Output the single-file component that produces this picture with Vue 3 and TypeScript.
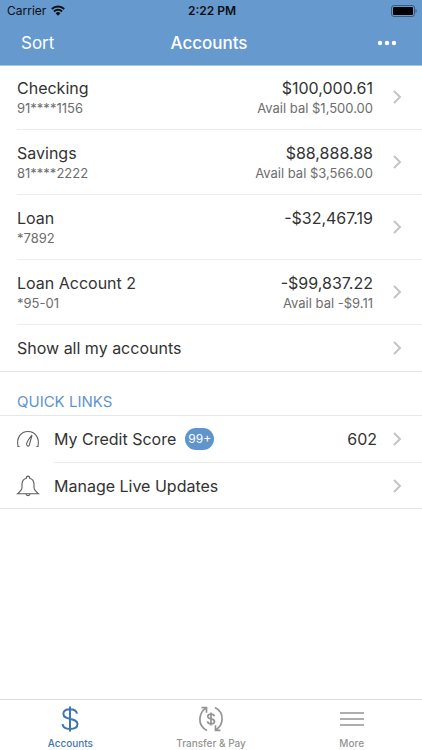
<script setup lang="ts">
interface Account {
  name: string
  number: string
  balance: string
  available?: string
}

interface QuickLink {
  label: string
  icon: 'gauge' | 'bell'
  badge?: string
  value?: string
}

interface Tab {
  label: string
  icon: 'dollar' | 'transfer' | 'menu'
  active: boolean
}

const accounts: Account[] = [
  { name: 'Checking', number: '91****1156', balance: '$100,000.61', available: 'Avail bal $1,500.00' },
  { name: 'Savings', number: '81****2222', balance: '$88,888.88', available: 'Avail bal $3,566.00' },
  { name: 'Loan', number: '*7892', balance: '-$32,467.19' },
  { name: 'Loan Account 2', number: '*95-01', balance: '-$99,837.22', available: 'Avail bal -$9.11' },
]

const quickLinks: QuickLink[] = [
  { label: 'My Credit Score', icon: 'gauge', badge: '99+', value: '602' },
  { label: 'Manage Live Updates', icon: 'bell' },
]

const tabs: Tab[] = [
  { label: 'Accounts', icon: 'dollar', active: true },
  { label: 'Transfer & Pay', icon: 'transfer', active: false },
  { label: 'More', icon: 'menu', active: false },
]
</script>

<template>
  <div class="screen">
    <header class="top">
      <div class="status">
        <span class="carrier">
          Carrier
          <svg class="wifi" viewBox="0 0 14 11" aria-hidden="true">
            <path d="M0.8 4a8.800 8.800 0 0 1 12.400 0" />
            <path d="M3 6.500a5.700 5.700 0 0 1 8 0" />
            <path class="solid" d="M7 10.700 4.600 8.300a3.400 3.400 0 0 1 4.800 0z" />
          </svg>
        </span>
        <time class="time">2:22 PM</time>
        <svg class="battery" viewBox="0 0 26 12" aria-hidden="true">
          <rect class="shell" x="0.5" y="0.5" width="23" height="11" rx="2.5" />
          <rect x="2" y="2" width="20" height="8" rx="1" />
          <path class="cap" d="M24.5 4v4c1.6-.6 1.6-3.400 0-4z" />
        </svg>
      </div>
      <nav class="bar">
        <button type="button" class="sort">Sort</button>
        <h1 class="title">Accounts</h1>
        <button type="button" class="options" aria-label="Options">
          <svg viewBox="0 0 20 6" aria-hidden="true">
            <circle cx="3" cy="3" r="2.200" />
            <circle cx="10" cy="3" r="2.200" />
            <circle cx="17" cy="3" r="2.200" />
          </svg>
        </button>
      </nav>
    </header>

    <main class="content">
      <ul class="list">
        <li v-for="account in accounts" :key="account.name" class="item">
          <a href="#" class="row account">
            <span class="lines">
              <span class="primary">{{ account.name }}</span>
              <span class="secondary">{{ account.number }}</span>
            </span>
            <span class="lines amounts">
              <span class="primary">{{ account.balance }}</span>
              <span v-if="account.available" class="secondary">{{ account.available }}</span>
            </span>
            <svg class="chevron" viewBox="0 0 8 14" aria-hidden="true"><path d="M1 1l6 6-6 6" /></svg>
          </a>
        </li>
        <li class="item last">
          <a href="#" class="row single">
            <span class="primary grow">Show all my accounts</span>
            <svg class="chevron" viewBox="0 0 8 14" aria-hidden="true"><path d="M1 1l6 6-6 6" /></svg>
          </a>
        </li>
      </ul>

      <h2 class="section">QUICK LINKS</h2>
      <ul class="list">
        <li v-for="link in quickLinks" :key="link.label" class="item link">
          <a href="#" class="row single">
            <svg v-if="link.icon === 'gauge'" class="link-icon" viewBox="0 0 22 22" aria-hidden="true">
              <path d="M2.600 18.500H1C-.8 9.500 4 3.500 11 3.500s11.800 6 10 15h-1.600" />
              <path d="M15 7.200C12.600 10 10.500 12.800 9.700 15.400c-.8 3 2 3.800 2.800 1.200.7-2.800 1.700-6.200 2.500-9.400z" />
            </svg>
            <svg v-else class="link-icon" viewBox="0 0 22 22" aria-hidden="true">
              <path d="M9.300 3.300C9.300.4 12.700.4 12.700 3.300c2.900.8 4.300 3 4.300 6v3.200c0 2.600 1.500 3.800 4.400 6.200H.6C3.500 16.300 5 15.100 5 12.500V9.300c0-3 1.400-5.200 4.300-6z" />
              <path d="M9 18.700c.2 2.600 3.800 2.600 4 0" />
            </svg>
            <span class="primary">{{ link.label }}</span>
            <span v-if="link.badge" class="badge">{{ link.badge }}</span>
            <span class="primary value">{{ link.value }}</span>
            <svg class="chevron" viewBox="0 0 8 14" aria-hidden="true"><path d="M1 1l6 6-6 6" /></svg>
          </a>
        </li>
      </ul>
    </main>

    <nav class="tabs">
      <a v-for="tab in tabs" :key="tab.label" href="#" class="tab" :class="{ active: tab.active }">
        <svg v-if="tab.icon === 'dollar'" class="tab-icon" viewBox="0 0 26 26" aria-hidden="true">
          <path d="M13 .5v25M20 7.600C19.500 4.800 17 3.200 13 3.200c-4 0-6.600 1.800-6.600 4.700 0 6.800 14.100 3.300 14.100 10.200 0 3-3 4.900-7.500 4.900-4.300 0-7.100-1.800-7.500-5" />
        </svg>
        <svg v-else-if="tab.icon === 'transfer'" class="tab-icon transfer" viewBox="0 0 26 26" aria-hidden="true">
          <path d="M9 24.500C4 22 1.600 17.800 1.900 12.500 2.200 8 4.400 4.500 8.300 1.900M3.500 1.700h5v5" />
          <path d="M17 1.500c5 2.500 7.400 6.700 7.100 12-.3 4.500-2.500 8-6.400 10.600M22.500 24.300h-5v-5" />
          <path d="M13 6.500v13M16.300 10.300c-.3-1.400-1.400-2.100-3.300-2.100-1.900 0-3.200.8-3.200 2.200 0 3.300 6.700 1.700 6.700 5 0 1.500-1.400 2.400-3.500 2.400s-3.400-.9-3.600-2.400" />
        </svg>
        <svg v-else class="tab-icon menu" viewBox="0 0 26 26" aria-hidden="true">
          <path d="M1 7h24M1 13h24M1 19h24" />
        </svg>
        <span>{{ tab.label }}</span>
      </a>
    </nav>
  </div>
</template>

<style>
body {
  margin: 0;
  background: #fff;
}
</style>

<style scoped>
.screen {
  display: flex;
  flex-direction: column;
  min-height: 100vh;
  font-family: Inter, "Liberation Sans", sans-serif;
  color: #333;
}

a {
  color: inherit;
  text-decoration: none;
}

svg {
  display: block;
  flex: none;
  overflow: visible;
}

.top {
  background: #6699cd;
  box-shadow: 0 1px 0 #a9c5e2;
}

.status {
  display: grid;
  grid-template-columns: 1fr auto 1fr;
  align-items: center;
  height: 21px;
  padding: 0 5px 0 7px;
  font-size: 12px;
  color: #0b0f14;
}

.carrier {
  display: flex;
  align-items: center;
  gap: 5px;
}

.wifi {
  width: 14px;
  height: 11px;
  fill: none;
  stroke: #0b0f14;
  stroke-width: 2;
}

.wifi .solid {
  fill: #0b0f14;
  stroke: none;
}

.time {
  font-weight: 600;
}

.battery {
  justify-self: end;
  width: 26px;
  height: 12px;
  fill: #000;
}

.battery .shell {
  fill: none;
  stroke: #3c5a79;
}

.battery .cap {
  fill: #3c5a79;
}

.bar {
  display: grid;
  grid-template-columns: 1fr auto 1fr;
  align-items: center;
  height: 44px;
  padding: 0 25px 0 21px;
  color: #fff;
}

button {
  padding: 0;
  border: 0;
  background: none;
  color: inherit;
  font: inherit;
  cursor: pointer;
}

.sort {
  justify-self: start;
  font-size: 17px;
}

.title {
  margin: 0;
  font-size: 17px;
  font-weight: 500;
}

.options {
  justify-self: end;
}

.options svg {
  width: 20px;
  height: 6px;
  fill: #fff;
}

.content {
  flex: 1;
}

.list {
  margin: 0;
  padding: 0;
  list-style: none;
}

.item {
  padding-left: 17px;
}

.item.last,
.link:last-child {
  border-bottom: 1px solid #e6e6e8;
}

.row {
  display: flex;
  align-items: center;
  box-sizing: border-box;
  padding-right: 21px;
  border-bottom: 1px solid #ececee;
}

.item.last .row,
.link:last-child .row {
  border-bottom: 0;
}

.account {
  height: 65px;
}

.single {
  height: 46px;
}

.lines {
  display: flex;
  flex: 1;
  flex-direction: column;
  align-self: flex-start;
  padding-top: 13px;
}

.amounts {
  align-items: flex-end;
}

.primary {
  font-size: 16px;
  line-height: 20px;
}

.secondary {
  font-size: 13px;
  line-height: 20px;
  color: #6d6d6d;
}

.grow {
  flex: 1;
}

.chevron {
  width: 8px;
  height: 14px;
  margin-left: 20px;
  fill: none;
  stroke: #c4c4c8;
  stroke-width: 2;
}

.section {
  box-sizing: border-box;
  height: 44px;
  margin: 0;
  padding: 20px 17px 0;
  border-bottom: 1px solid #e6e6e8;
  font-size: 15px;
  font-weight: 400;
  line-height: 20px;
  color: #5f95cc;
}

.link {
  display: flex;
}

.link .row {
  position: relative;
  flex: 1;
  height: 45px;
  border-bottom: 0;
}

.link:first-child .row {
  height: 47px;
  padding-bottom: 1px;
}

.link:first-child .row::after {
  content: "";
  position: absolute;
  right: 0;
  bottom: 0;
  left: 37px;
  height: 1px;
  background: #ececee;
}

.link-icon {
  width: 22px;
  height: 22px;
  margin-right: 15px;
  fill: none;
  stroke: #5c5c5c;
  stroke-width: 1.1;
}

.badge {
  margin-left: 9px;
  padding: 0 3px;
  border-radius: 11px;
  background: #5f95cc;
  font-size: 12px;
  line-height: 22px;
  color: #fff;
}

.value {
  flex: 1;
  text-align: right;
}

.value + .chevron {
  margin-left: 16px;
}

.tabs {
  display: flex;
  height: 50px;
  border-top: 1px solid #dcdcde;
}

.tab {
  display: flex;
  flex: 1;
  flex-direction: column;
  align-items: center;
  gap: 4px;
  padding-top: 6px;
  font-size: 10px;
  font-weight: 500;
  line-height: 14px;
  color: #949494;
}

.tab.active {
  color: #3f76b0;
}

.tab-icon {
  width: 26px;
  height: 26px;
  fill: none;
  stroke: currentColor;
  stroke-width: 2;
}

.tab-icon.transfer {
  stroke-width: 1.7;
}

.tab-icon.menu {
  stroke-width: 1.5;
}
</style>
